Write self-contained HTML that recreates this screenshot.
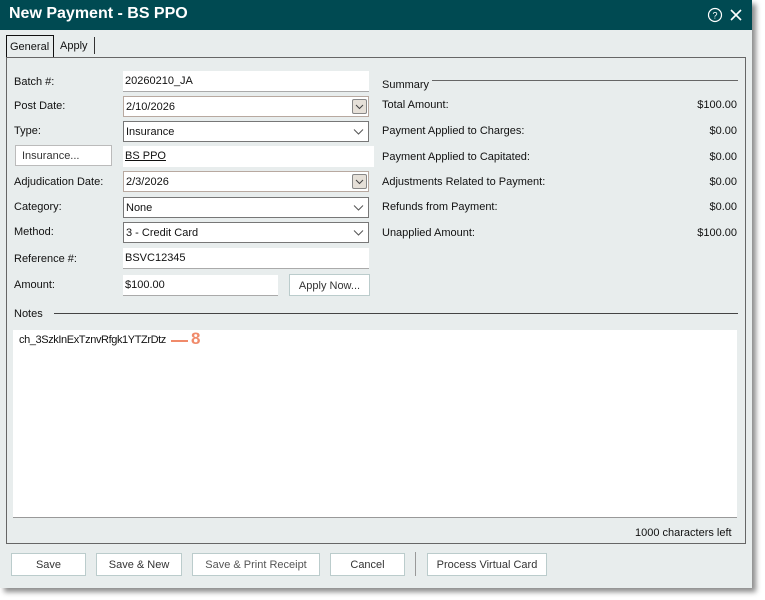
<!DOCTYPE html>
<html><head><style>
*{box-sizing:border-box;margin:0;padding:0}
body{width:765px;height:600px;background:#fff;position:relative;overflow:hidden;font-family:"Liberation Sans",sans-serif;font-size:11px;color:#111}
.dlg{position:absolute;left:0;top:0;width:752px;height:588px;background:#e8eded;box-shadow:4px 4px 5px rgba(0,0,0,.45)}
.title{position:absolute;left:0;top:0;width:752px;height:30px;background:#004a52;color:#fff;font-weight:bold;font-size:16px;padding:5px 0 0 9px}
.a{position:absolute}
.lbl{position:absolute;font-size:11px}
.in{position:absolute;background:#fff;border-bottom:1px solid #aaa;height:21px;padding:4px 0 0 2px;font-size:11px}
.dd{position:absolute;background:#fff;border:1px solid #777;height:21px;padding:4px 0 0 2px;font-size:11px}
.dd svg{position:absolute;right:4px;top:6px}
.cal{position:absolute;right:1px;top:2px;width:15px;height:15px;border:1px solid #888;background:#e6e0d8;border-radius:2px}
.btn{position:absolute;background:#fff;border:1px solid #bcc;height:23px;text-align:center;padding-top:5px;font-size:11px;color:#333}
.sr{position:absolute;left:382px;width:355px;font-size:11px}
.sr span{float:right}
</style></head><body>
<div class="dlg">
<div class="title">New Payment - BS PPO</div>
<svg class="a" style="left:707px;top:7px" width="16" height="16"><circle cx="8" cy="8" r="6.5" fill="none" stroke="#fff" stroke-width="1.2"/><text x="8" y="11.5" fill="#fff" font-size="9" text-anchor="middle" font-family="Liberation Sans">?</text></svg>
<svg class="a" style="left:729px;top:8px" width="14" height="14"><path d="M2 2L12 12M12 2L2 12" stroke="#fff" stroke-width="1.6"/></svg>
<div class="a" style="left:6px;top:35px;width:48px;height:23px;border:1px solid #111;background:#e8eded;padding:5px 0 0 3px">General</div>
<div class="a" style="left:60px;top:40px">Apply</div>
<div class="a" style="left:94px;top:37px;width:1px;height:17px;background:#333"></div>
<div class="a" style="left:6px;top:57px;width:740px;height:487px;border:1px solid #666"></div>

<div class="lbl" style="left:14px;top:76px">Batch #:</div>
<div class="in" style="left:123px;top:71px;width:246px">20260210_JA</div>
<div class="lbl" style="left:14px;top:100px">Post Date:</div>
<div class="in" style="left:123px;top:96px;width:246px;border:1px solid #b8a9a0;padding-top:4px">2/10/2026<div class="cal"><svg width="13" height="13"><path d="M3 5l3.5 3.5L10 5" stroke="#444" fill="none"/></svg></div></div>
<div class="lbl" style="left:14px;top:125px">Type:</div>
<div class="dd" style="left:123px;top:121px;width:246px">Insurance<svg width="11" height="8"><path d="M1 1.5l4.5 4.5L10 1.5" stroke="#555" fill="none"/></svg></div>
<div class="a" style="left:15px;top:145px;width:97px;height:21px;border:1px solid #bbb;background:#fff;padding:4px 0 0 6px;color:#333">Insurance...</div>
<div class="in" style="left:123px;top:146px;width:251px;border:none"><u>BS PPO</u></div>
<div class="lbl" style="left:14px;top:176px">Adjudication Date:</div>
<div class="in" style="left:123px;top:171px;width:246px;border:1px solid #b8a9a0;padding-top:4px">2/3/2026<div class="cal"><svg width="13" height="13"><path d="M3 5l3.5 3.5L10 5" stroke="#444" fill="none"/></svg></div></div>
<div class="lbl" style="left:14px;top:201px">Category:</div>
<div class="dd" style="left:123px;top:197px;width:246px">None<svg width="11" height="8"><path d="M1 1.5l4.5 4.5L10 1.5" stroke="#555" fill="none"/></svg></div>
<div class="lbl" style="left:14px;top:226px">Method:</div>
<div class="dd" style="left:123px;top:222px;width:246px">3 - Credit Card<svg width="11" height="8"><path d="M1 1.5l4.5 4.5L10 1.5" stroke="#555" fill="none"/></svg></div>
<div class="lbl" style="left:14px;top:253px">Reference #:</div>
<div class="in" style="left:123px;top:248px;width:246px">BSVC12345</div>
<div class="lbl" style="left:14px;top:279px">Amount:</div>
<div class="in" style="left:123px;top:275px;width:155px">$100.00</div>
<div class="btn" style="left:289px;top:274px;width:81px;height:22px">Apply Now...</div>

<div class="lbl" style="left:382px;top:79px">Summary</div>
<div class="a" style="left:432px;top:80px;width:306px;height:1px;background:#666"></div>
<div class="sr" style="top:99px">Total Amount:<span>$100.00</span></div>
<div class="sr" style="top:125px">Payment Applied to Charges:<span>$0.00</span></div>
<div class="sr" style="top:151px">Payment Applied to Capitated:<span>$0.00</span></div>
<div class="sr" style="top:176px">Adjustments Related to Payment:<span>$0.00</span></div>
<div class="sr" style="top:201px">Refunds from Payment:<span>$0.00</span></div>
<div class="sr" style="top:227px">Unapplied Amount:<span>$100.00</span></div>

<div class="lbl" style="left:14px;top:308px">Notes</div>
<div class="a" style="left:54px;top:313px;width:684px;height:1px;background:#444"></div>
<div class="a" style="left:13px;top:330px;width:724px;height:188px;background:#fff;border-bottom:1px solid #999"></div>
<div class="lbl" style="left:19px;top:334px;letter-spacing:-0.4px">ch_3SzkInExTznvRfgk1YTZrDtz</div>
<div class="a" style="left:171px;top:340px;width:17px;height:2px;background:#f08a6a"></div>
<div class="a" style="left:191px;top:329px;color:#f08a6a;font-weight:bold;font-size:17px">8</div>
<div class="lbl" style="left:635px;top:527px">1000 characters left</div>

<div class="btn" style="left:11px;top:553px;width:75px">Save</div>
<div class="btn" style="left:96px;top:553px;width:86px">Save &amp; New</div>
<div class="btn" style="left:192px;top:553px;width:128px;color:#555">Save &amp; Print Receipt</div>
<div class="btn" style="left:330px;top:553px;width:75px">Cancel</div>
<div class="a" style="left:415px;top:552px;width:1px;height:24px;background:#999"></div>
<div class="btn" style="left:427px;top:553px;width:120px">Process Virtual Card</div>
</div>
</body></html>
